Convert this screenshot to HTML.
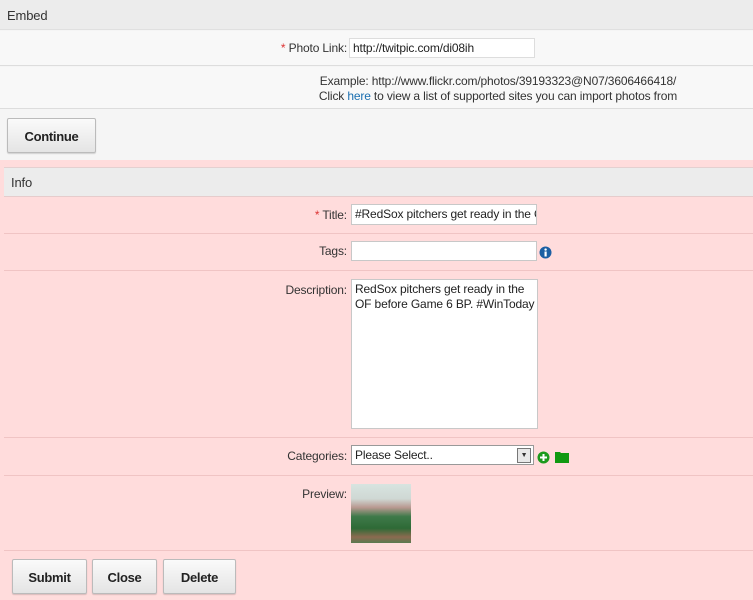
<!DOCTYPE html>
<html><head><style>
*{box-sizing:border-box;margin:0;padding:0}
body{width:753px;height:600px;overflow:hidden;font-family:"Liberation Sans",sans-serif;font-size:12px;letter-spacing:-0.15px;color:#333;background:#f5f5f5;position:relative}
.a{position:absolute}
.lbl{position:absolute;text-align:right;width:347px;left:0}
.inp{position:absolute;background:#fff;border:1px solid #c8c8c8;font-size:12px;padding:2px 3px;color:#222}
.btn{position:absolute;background:linear-gradient(#fafafa,#e4e4e4);border:1px solid #bbb;border-radius:2px;font-weight:bold;font-size:13px;letter-spacing:-0.3px;color:#222;text-align:center;box-shadow:0 1px 1px rgba(0,0,0,.15)}
.req{color:#d33}
.line{position:absolute;left:4px;right:0;height:1px;background:#f0c4c4}
</style></head><body>
<div class="a" style="left:0;top:0;width:753px;height:30px;background:#ececec;border-bottom:1px solid #e0e0e0"></div>
<div class="a" style="left:7px;top:8px;font-size:13px">Embed</div>
<div class="a" style="left:0;top:31px;width:753px;height:35px;background:#f8f8f8;border-bottom:1px solid #ddd"></div>
<div class="lbl" style="top:41px"><span class="req">*</span> Photo Link:</div>
<div class="inp" style="left:349px;top:38px;width:186px;height:20px;border-color:#ddd">http://twitpic.com/di08ih</div>
<div class="a" style="left:0;top:67px;width:753px;height:42px;background:#f8f8f8;border-bottom:1px solid #ddd"></div>
<div class="a" style="left:0;top:74px;text-align:center;line-height:15px;width:996px">Example: http://www.flickr.com/photos/39193323@N07/3606466418/<br>Click <span style="color:#1a6fb0">here</span> to view a list of supported sites you can import photos from</div>
<div class="btn" style="left:7px;top:118px;width:89px;height:35px;line-height:36px">Continue</div>
<div class="a" style="left:0;top:160px;width:753px;height:440px;background:#ffdcdc"></div>
<div class="a" style="left:4px;top:167px;width:749px;height:30px;background:#ececec;border-top:1px solid #e4d0d0;border-bottom:1px solid #e6cccc"></div>
<div class="a" style="left:11px;top:175px;font-size:13px">Info</div>
<div class="lbl" style="top:208px"><span class="req">*</span> Title:</div>
<div class="inp" style="left:351px;top:204px;width:186px;height:21px;overflow:hidden;white-space:nowrap">#RedSox pitchers get ready in the OF</div>
<div class="line" style="top:233px"></div>
<div class="lbl" style="top:244px">Tags:</div>
<div class="inp" style="left:351px;top:241px;width:186px;height:20px"></div>
<svg class="a" style="left:539px;top:246px" width="13" height="13"><circle cx="6.5" cy="6.5" r="6" fill="#1c5fa3"/><rect x="5.5" y="5.5" width="2.2" height="5" fill="#fff"/><circle cx="6.6" cy="3.6" r="1.2" fill="#fff"/></svg>
<div class="line" style="top:270px"></div>
<div class="lbl" style="top:283px">Description:</div>
<div class="inp" style="left:351px;top:279px;width:187px;height:150px;line-height:15px;white-space:nowrap">RedSox pitchers get ready in the<br>OF before Game 6 BP. #WinToday</div>
<div class="line" style="top:437px"></div>
<div class="lbl" style="top:449px">Categories:</div>
<div class="inp" style="left:351px;top:445px;width:183px;height:20px;border-color:#999">Please Select..</div>
<div class="a" style="left:517px;top:448px;width:14px;height:15px;border:1px solid #777;background:#e8e8e8;font-size:7px;text-align:center;line-height:13px">▼</div>
<svg class="a" style="left:537px;top:451px" width="13" height="13"><circle cx="6.5" cy="6.5" r="6" fill="#1d9a1d"/><rect x="3" y="5.5" width="7" height="2" fill="#fff"/><rect x="5.5" y="3" width="2" height="7" fill="#fff"/></svg>
<svg class="a" style="left:555px;top:451px" width="14" height="12"><path d="M0 1h5l1 1h8v10H0z" fill="#119911"/></svg>
<div class="line" style="top:475px"></div>
<div class="lbl" style="top:487px">Preview:</div>
<div class="a" style="left:351px;top:484px;width:60px;height:59px;background:linear-gradient(#d8e4e0 0%,#cfd8d4 25%,#b89890 40%,#3f7a4a 55%,#2e6a36 75%,#8c6a50 90%,#5a7a50 100%)"></div>
<div class="line" style="top:550px"></div>
<div class="btn" style="left:12px;top:559px;width:75px;height:35px;line-height:36px">Submit</div>
<div class="btn" style="left:92px;top:559px;width:65px;height:35px;line-height:36px">Close</div>
<div class="btn" style="left:163px;top:559px;width:73px;height:35px;line-height:36px">Delete</div>
</body></html>
